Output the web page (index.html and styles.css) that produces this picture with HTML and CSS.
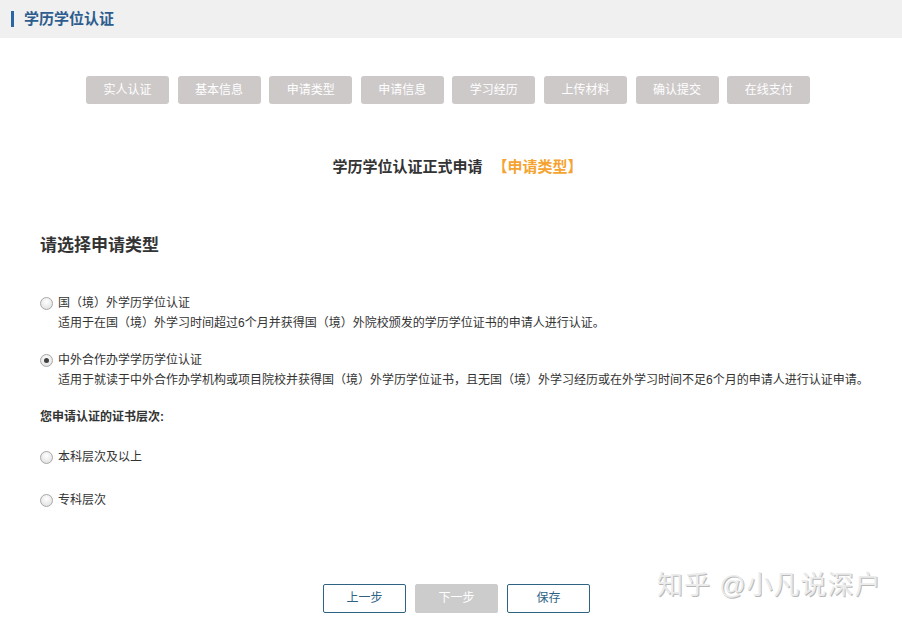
FILE: index.html
```html
<!DOCTYPE html>
<html lang="zh">
<head>
<meta charset="utf-8">
<title>学历学位认证</title>
<link rel="stylesheet" href="styles.css">
</head>
<body>
<div class="header"><span class="bar"></span><span class="htitle">学历学位认证</span></div>
<div class="steps">
  <div class="step">实人认证</div>
  <div class="step">基本信息</div>
  <div class="step">申请类型</div>
  <div class="step">申请信息</div>
  <div class="step">学习经历</div>
  <div class="step">上传材料</div>
  <div class="step">确认提交</div>
  <div class="step">在线支付</div>
</div>
<div class="title">学历学位认证正式申请 <span class="orange">【申请类型】</span></div>
<div class="content">
  <div class="heading">请选择申请类型</div>
  <div class="option first">
    <div class="opt-row"><span class="radio"></span><span>国（境）外学历学位认证</span></div>
    <div class="desc">适用于在国（境）外学习时间超过6个月并获得国（境）外院校颁发的学历学位证书的申请人进行认证。</div>
  </div>
  <div class="option second">
    <div class="opt-row"><span class="radio checked"></span><span>中外合作办学学历学位认证</span></div>
    <div class="desc">适用于就读于中外合作办学机构或项目院校并获得国（境）外学历学位证书，且无国（境）外学习经历或在外学习时间不足6个月的申请人进行认证申请。</div>
  </div>
  <div class="sub">您申请认证的证书层次:</div>
  <div class="opt-row level1"><span class="radio"></span><span>本科层次及以上</span></div>
  <div class="opt-row level2"><span class="radio"></span><span>专科层次</span></div>
</div>
<div class="actions">
  <div class="btn">上一步</div>
  <div class="btn disabled">下一步</div>
  <div class="btn">保存</div>
  <div class="watermark">知乎 @小凡说深户</div>
</div>
</body>
</html>
```
FILE: styles.css
```css
html, body {
  margin: 0;
  padding: 0;
  background: #ffffff;
  font-family: "Liberation Sans", "Noto Sans CJK SC", sans-serif;
  font-size: 12px;
  color: #333333;
  width: 902px;
  height: 625px;
  overflow: hidden;
}
.header {
  height: 38px;
  background: #f0f0f0;
  display: flex;
  align-items: center;
  padding-left: 11px;
}
.bar {
  width: 3px;
  height: 16px;
  background: #2b66a3;
  margin-right: 10px;
}
.htitle {
  font-size: 15px;
  font-weight: bold;
  color: #2d5d8e;
  line-height: 16px;
}
.steps {
  display: flex;
  gap: 8.6px;
  padding-left: 86px;
  margin-top: 38px;
}
.step {
  width: 83px;
  height: 28px;
  line-height: 29px;
  text-align: center;
  background: #cdc9c9;
  color: #ffffff;
  border-radius: 3px;
  font-size: 12px;
}
.title {
  margin-top: 53px;
  text-align: center;
  font-size: 15px;
  font-weight: bold;
  color: #333333;
  line-height: 20px;
  padding-left: 13px;
}
.orange {
  color: #f5a431;
  margin-left: 6px;
}
.content {
  padding-left: 40px;
}
.heading {
  margin-top: 58px;
  font-size: 17px;
  font-weight: bold;
  color: #333333;
  line-height: 22px;
}
.option.first {
  margin-top: 38px;
}
.option.second {
  margin-top: 21px;
}
.opt-row {
  display: flex;
  align-items: center;
  height: 16px;
  line-height: 16px;
  color: #333333;
}
.radio {
  width: 13px;
  height: 13px;
  border-radius: 50%;
  border: 1px solid #a8a8a8;
  box-sizing: border-box;
  background: radial-gradient(circle at 50% 35%, #ffffff 0%, #e6e6e6 70%, #d6d6d6 100%);
  margin-right: 5px;
  position: relative;
  flex: none;
}
.radio.checked::after {
  content: "";
  position: absolute;
  left: 3px;
  top: 3px;
  width: 5px;
  height: 5px;
  border-radius: 50%;
  background: #404040;
}
.desc {
  padding-left: 18px;
  margin-top: 4px;
  line-height: 16px;
  color: #333333;
}
.sub {
  margin-top: 21px;
  font-weight: bold;
  line-height: 16px;
}
.level1 {
  margin-top: 24px;
}
.level2 {
  margin-top: 27px;
}
.actions {
  position: relative;
  display: flex;
  gap: 9px;
  padding-left: 323px;
  margin-top: 76px;
}
.btn {
  width: 83px;
  height: 29px;
  box-sizing: border-box;
  border: 1px solid #2f6384;
  border-radius: 2px;
  text-align: center;
  line-height: 27px;
  color: #2f6384;
  background: #ffffff;
}
.btn.disabled {
  background: #cccccc;
  border-color: #cccccc;
  color: #ffffff;
}
.watermark {
  position: absolute;
  left: 657px;
  top: -14px;
  font-size: 26px;
  color: #ececec;
  text-shadow: 1px 1px 0 #b8b8b8;
  letter-spacing: 1px;
  line-height: 30px;
  white-space: nowrap;
}
```
